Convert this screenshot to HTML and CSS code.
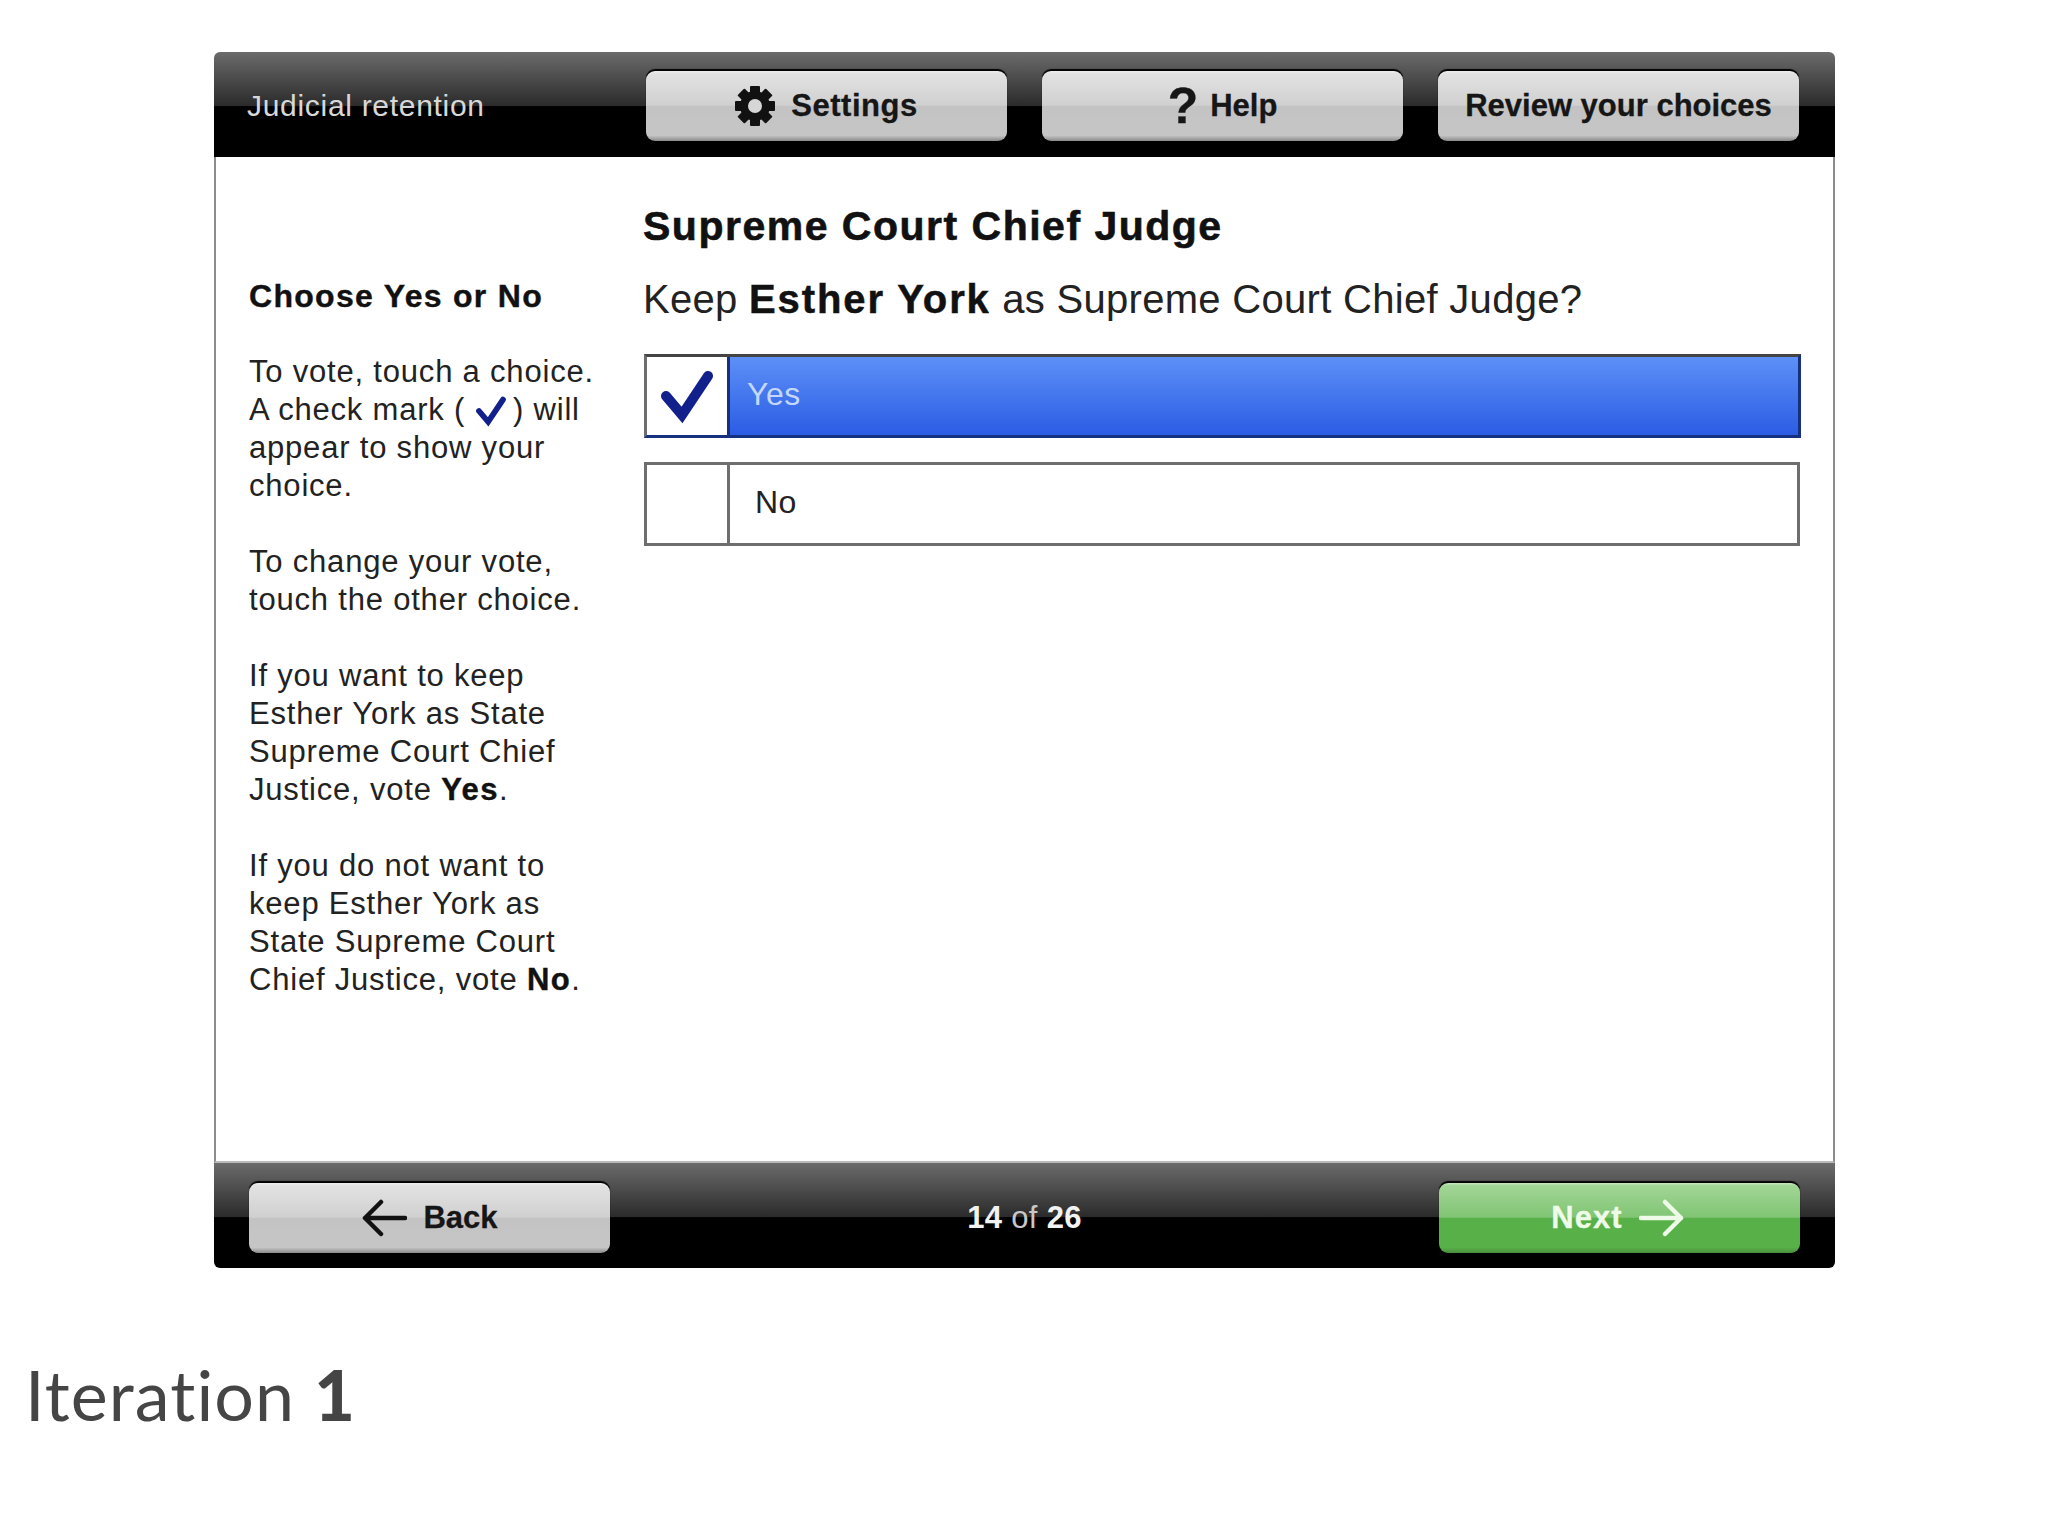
FILE: index.html
```html
<!DOCTYPE html>
<html>
<head>
  <meta name="viewport" content="width=device-width, initial-scale=1">
  <link rel="stylesheet" href="styles.css">
  <title>Judicial retention</title>
</head>
<body>

<div class="frame">
  <div class="bar topBar">
    <div class="contestType">Judicial retention</div>
    <div class="topButtons">
      <button class="btn settingsBtn">
        <svg class="gearIcon" viewBox="0 0 40 40">
          <g fill="#111">
            <rect x="15" y="0" width="10" height="40" rx="1"/>
            <rect x="15" y="0" width="10" height="40" rx="1" transform="rotate(45 20 20)"/>
            <rect x="15" y="0" width="10" height="40" rx="1" transform="rotate(90 20 20)"/>
            <rect x="15" y="0" width="10" height="40" rx="1" transform="rotate(135 20 20)"/>
            <circle cx="20" cy="20" r="15"/>
          </g>
          <circle cx="20" cy="20" r="7" fill="#d6d6d6"/>
        </svg>
        Settings
      </button>
      <button class="btn"><span class="helpMark">?</span> Help</button>
      <button class="btn">Review your choices</button>
    </div>
  </div>

  <div class="content">
    <div class="instructions">
      <h2>Choose Yes or No</h2>
      <p>To vote, touch a choice.<br>A check mark (
        <svg class="checkSmall" viewBox="0 0 56 56"><path d="M7 28 L23 47 L49 8" fill="none" stroke="#12208c" stroke-width="10" stroke-linecap="round"/></svg>
        ) will<br>appear to show your<br>choice.</p>
      <p>To change your vote,<br>touch the other choice.</p>
      <p>If you want to keep<br>Esther York as State<br>Supreme Court Chief<br>Justice, vote <b>Yes</b>.</p>
      <p>If you do not want to<br>keep Esther York as<br>State Supreme Court<br>Chief Justice, vote <b>No</b>.</p>
    </div>
    <div class="contest">
      <h1>Supreme Court Chief Judge</h1>
      <div class="question">Keep <b>Esther York</b> as Supreme Court Chief Judge?</div>
      <div class="option selected">
        <div class="checkBox">
          <svg class="checkBig" viewBox="0 0 56 56"><path d="M7 28 L23 47 L49 8" fill="none" stroke="#12208c" stroke-width="10" stroke-linecap="round"/></svg>
        </div>
        <div class="optionLabel">Yes</div>
      </div>
      <div class="option">
        <div class="checkBox"></div>
        <div class="optionLabel">No</div>
      </div>
    </div>
  </div>

  <div class="bar bottomBar">
    <button class="btn navBtn">
      <svg class="arrowIcon" viewBox="0 0 46 38"><path d="M44 19 H4 M20 3 L4 19 L20 35" fill="none" stroke="#111" stroke-width="4.5" stroke-linecap="round" stroke-linejoin="round"/></svg>
      Back
    </button>
    <div class="progress"><b>14</b> of <b>26</b></div>
    <button class="btn navBtn nextBtn">
      Next
      <svg class="arrowIcon" viewBox="0 0 46 38"><path d="M2 19 H42 M26 3 L42 19 L26 35" fill="none" stroke="#eefbe8" stroke-width="4.5" stroke-linecap="round" stroke-linejoin="round"/></svg>
    </button>
  </div>
</div>

<div class="caption">Iteration <b>1</b></div>

</body>
</html>
```

FILE: styles.css
```css
html, body {
  margin: 0;
  background-color: #fff;
}

body {
  font-family: 'Liberation Sans', Arial, sans-serif;
  color: #222;
}

.frame {
  width: 1621px;
  margin: 52px 0 0 214px;
  display: flex;
  flex-direction: column;
}

.bar {
  height: 105px;
  box-sizing: border-box;
  display: flex;
  align-items: center;
  background-image: linear-gradient(to bottom, #6b6b6b 0, #2b2b2b 51%, #000 52%, #000 100%);
}

.topBar {
  border-top-left-radius: 6px;
  border-top-right-radius: 6px;
  padding: 2px 36px 0 33px;
  justify-content: space-between;
}

.bottomBar {
  border-bottom-left-radius: 6px;
  border-bottom-right-radius: 6px;
  padding: 5px 35px 0 35px;
  justify-content: space-between;
}

.contestType {
  color: #d8d8d8;
  font-size: 30px;
  letter-spacing: 0.7px;
}

.topButtons {
  display: flex;
  gap: 35px;
}

.btn {
  width: 361px;
  height: 70px;
  padding: 0;
  border: 0;
  border-radius: 9px;
  display: flex;
  align-items: center;
  justify-content: center;
  gap: 16px;
  font-family: inherit;
  font-size: 31px;
  font-weight: bold;
  -webkit-text-stroke: 0.3px;
  color: #161616;
  background-image: linear-gradient(to bottom, #f0f0f0 0, #e2e2e2 4%, #d0d0d0 49%, #c3c3c3 50%, #c6c6c6 92%, #8a8a8a 100%);
  box-shadow: 0 -2px 1px #000;
}

.settingsBtn {
  letter-spacing: 0.5px;
}

.gearIcon {
  width: 40px;
  height: 40px;
}

.helpMark {
  font-size: 50px;
  line-height: 44px;
  margin-right: -4px;
}

.content {
  height: 1006px;
  display: flex;
  box-sizing: border-box;
  border-left: 2px solid #8c8c8c;
  border-right: 2px solid #8c8c8c;
  border-bottom: 2px solid #bbb;
  background-color: #fff;
}

.instructions {
  width: 427px;
  box-sizing: border-box;
  padding: 120px 0 0 33px;
  font-size: 31px;
  letter-spacing: 0.8px;
  line-height: 38px;
  white-space: nowrap;
}

.instructions h2 {
  margin: 0 0 38px 0;
  font-size: 32px;
  letter-spacing: 1.3px;
  -webkit-text-stroke: 0.4px;
  line-height: 38px;
  color: #111;
}

.instructions p {
  margin: 0 0 38px 0;
}

.instructions b {
  color: #111;
  letter-spacing: 1.5px;
  -webkit-text-stroke: 0.4px;
}

.checkSmall {
  width: 32px;
  height: 32px;
  margin-right: -3px;
  vertical-align: -7px;
}

.contest {
  flex: 1;
  padding: 45px 33px 0 0;
}

.contest h1 {
  margin: 0;
  font-size: 41px;
  letter-spacing: 1.5px;
  -webkit-text-stroke: 0.6px;
  line-height: 48px;
  color: #111;
}

.question {
  margin-top: 25px;
  font-size: 40px;
  letter-spacing: 0.3px;
  line-height: 48px;
  margin-bottom: 31px;
}

.question b {
  color: #111;
  letter-spacing: 1.9px;
  -webkit-text-stroke: 0.5px;
}

.option {
  height: 84px;
  box-sizing: border-box;
  border: 3px solid #6e6e6e;
  margin: 0 0 24px 1px;
  display: flex;
  align-items: stretch;
  font-size: 32px;
  letter-spacing: 0.5px;
}

.checkBox {
  width: 80px;
  flex-shrink: 0;
  border-right: 3px solid #6e6e6e;
  display: flex;
  align-items: center;
  justify-content: center;
}

.checkBig {
  width: 56px;
  height: 56px;
}

.optionLabel {
  flex: 1;
  display: flex;
  align-items: center;
  padding: 0 0 4px 25px;
}

.selected {
  margin-right: -1px;
  border-color: #14307e;
  border-left-color: #6e6e6e;
  border-top-color: #444;
}

.selected .checkBox {
  border-right-color: #14307e;
}

.selected .optionLabel {
  padding-left: 17px;
  color: #c3d8fb;
  background-image: linear-gradient(to bottom, #5d90f7, #2b5ce4);
}

.progress {
  color: #c8c8c8;
  font-size: 31px;
  font-weight: normal;
  letter-spacing: 0.3px;
}

.progress b {
  color: #f2f2f2;
}

.arrowIcon {
  width: 46px;
  height: 38px;
}

.nextBtn {
  color: #eefbe8;
  letter-spacing: 1.1px;
  padding-right: 3px;
  background-image: linear-gradient(to bottom, #c8e6c0 0, #a2d596 4%, #80c574 49%, #58b048 50%, #58b048 92%, #4a8f3e 100%);
}

.caption {
  margin: 84px 0 0 25px;
  font-family: Lato, 'Open Sans', sans-serif;
  font-size: 70px;
  letter-spacing: 1.1px;
  line-height: 84px;
  color: #454545;
}

.caption b {
  font-weight: 900;
}
```
